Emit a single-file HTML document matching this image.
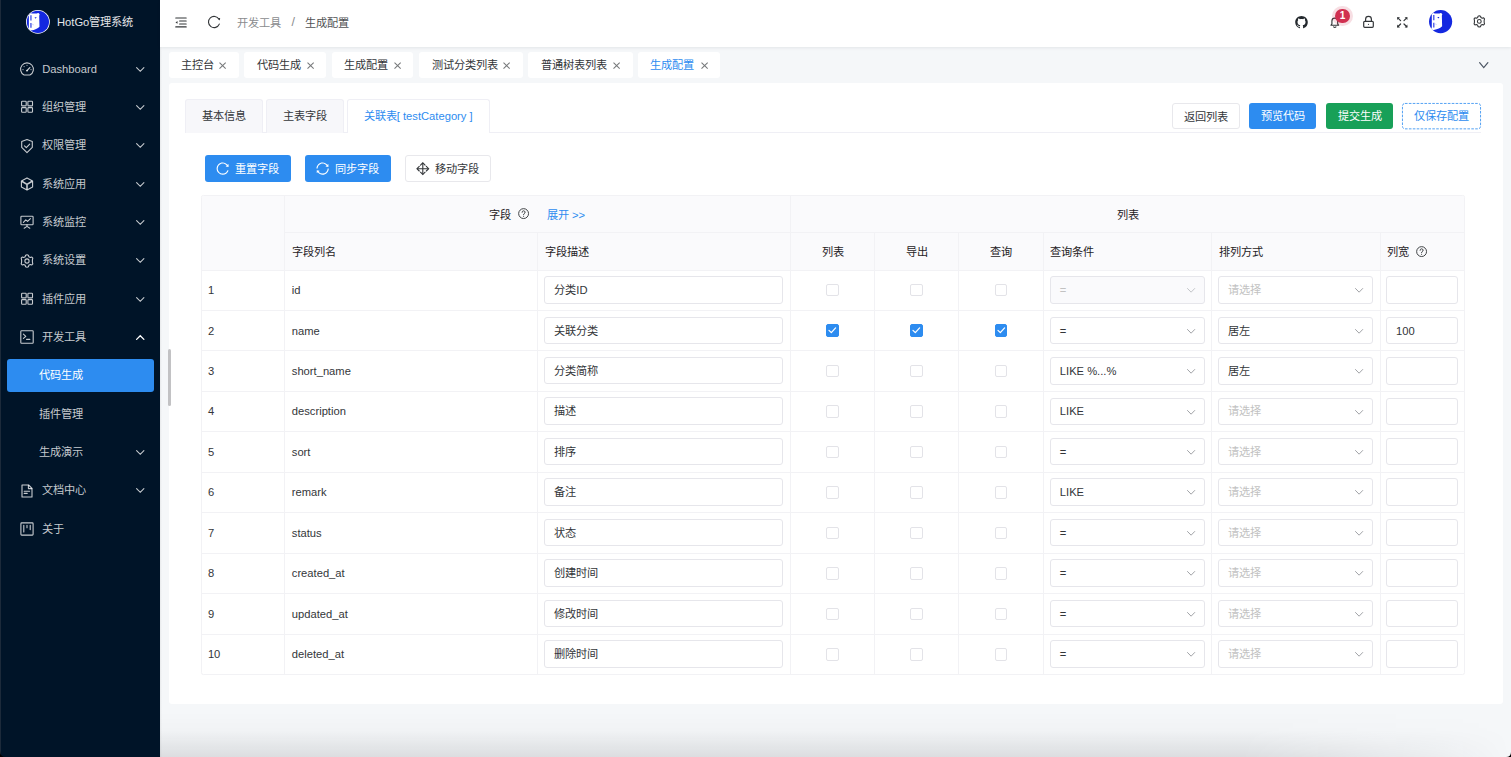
<!DOCTYPE html>
<html lang="zh-CN">
<head>
<meta charset="utf-8">
<style>
*{box-sizing:border-box;margin:0;padding:0}
html,body{width:1511px;height:757px;overflow:hidden;background:#f5f7f9;font-family:"Liberation Sans",sans-serif;font-size:11.2px;color:#333639}
svg{display:block;position:absolute;overflow:visible}
.a{position:absolute;white-space:nowrap;line-height:14px}
#side{position:absolute;left:0;top:0;width:160px;height:757px;background:#001428}
.mt{color:rgba(255,255,255,.78)}
#hdr{position:absolute;left:160px;top:0;width:1351px;height:47px;background:#fff;box-shadow:0 1px 3px rgba(0,21,41,.08)}
.tab{position:absolute;top:52px;height:26px;background:#fff;border-radius:3px}
#card{position:absolute;left:169px;top:83px;width:1334px;height:621px;background:#fff;border-radius:3px}
.itab{position:absolute;top:99px;height:34px;background:#f7f7fa;border:1px solid #efeff5;border-bottom:none;border-radius:3px 3px 0 0}
.btn{position:absolute;height:27px;border-radius:3px;text-align:center;line-height:27px;white-space:nowrap}
.cell{position:absolute}
.inp{position:absolute;height:27.4px;border:1px solid #e6e6eb;border-radius:3px;background:#fff}
.cb{position:absolute;width:12.5px;height:12.5px;border:1px solid #e3e3e8;border-radius:2px;background:#fff}
.cbon{background:#2d8cf0;border-color:#2d8cf0}
</style>
</head>
<body>
<div id="side">
<svg style="left:26.3px;top:9.8px" width="23.8" height="23.8" viewBox="0 0 24 24"><defs><clipPath id="lc1"><circle cx="12" cy="12" r="11.2"/></clipPath></defs><circle cx="12" cy="12" r="12" fill="#fff"/><circle cx="12" cy="12" r="11.2" fill="#1428e0"/>
<g clip-path="url(#lc1)"><path d="M2.9 4.2 Q3.2 3 4.4 3.1 Q5.4 3.2 6 3.6 L10.8 3.6 Q11.8 2.8 13 3.3 L13.8 4.6 L13.3 5.8 L13.6 16.8 Q11 19.6 5 20.6 L0 22 L2.9 18 Z" fill="#fff"/>
<path d="M5 5.3 V10.5 M5 13.1 V18" stroke="#1428e0" stroke-width="1.1"/><path d="M8.6 7.2 h2.2 l-1.1 1.6z" fill="#1428e0"/><path d="M5.8 14 l2.2 1.2" stroke="#c9cdf6" stroke-width="0.8"/></g></svg>
<div class="a" style="left:57px;top:14.5px;font-size:11.2px;color:#e6e6e8">HotGo管理系统</div>
<svg class="mt" style="left:20px;top:62.00px" width="14" height="14" viewBox="0 0 14 14"><path d="M4.09 13 A6.4 6.4 0 1 1 9.91 13 Z" stroke="currentColor" fill="none" stroke-width="1.1" stroke-linecap="round" stroke-linejoin="round"/><path d="M7 8.6 L9.8 5.6" stroke="currentColor" stroke-width="1.3" stroke-linecap="round"/><circle cx="7" cy="8.6" r="0.9" fill="currentColor"/><circle cx="7" cy="3.3" r="0.55" fill="currentColor"/><circle cx="4.1" cy="4.6" r="0.55" fill="currentColor"/><circle cx="3" cy="7.6" r="0.55" fill="currentColor"/><circle cx="11" cy="7.6" r="0.55" fill="currentColor"/></svg>
<div class="a mt" style="left:42.2px;top:61.60px">Dashboard</div>
<svg class="mt" style="left:135.5px;top:66.50px" width="8.5" height="5" viewBox="0 0 8.5 5"><path d="M0.6 0.6 L4.25 4.3 L7.9 0.6" stroke="currentColor" fill="none" stroke-width="1.1" stroke-linecap="round"/></svg>
<svg class="mt" style="left:20px;top:100.30px" width="14" height="14" viewBox="0 0 14 14"><rect x="1.6" y="1.3" width="4.6" height="4.6" rx="0.7" stroke="currentColor" fill="none" stroke-width="1.1" stroke-linecap="round" stroke-linejoin="round"/><rect x="7.9" y="1.3" width="4.6" height="4.6" rx="0.7" stroke="currentColor" fill="none" stroke-width="1.1" stroke-linecap="round" stroke-linejoin="round"/><rect x="1.6" y="7.6" width="4.6" height="4.6" rx="0.7" stroke="currentColor" fill="none" stroke-width="1.1" stroke-linecap="round" stroke-linejoin="round"/><rect x="7.9" y="7.6" width="4.6" height="4.6" rx="0.7" stroke="currentColor" fill="none" stroke-width="1.1" stroke-linecap="round" stroke-linejoin="round"/></svg>
<div class="a mt" style="left:42.2px;top:99.90px">组织管理</div>
<svg class="mt" style="left:135.5px;top:104.80px" width="8.5" height="5" viewBox="0 0 8.5 5"><path d="M0.6 0.6 L4.25 4.3 L7.9 0.6" stroke="currentColor" fill="none" stroke-width="1.1" stroke-linecap="round"/></svg>
<svg class="mt" style="left:20px;top:138.70px" width="14" height="14" viewBox="0 0 14 14"><path d="M7 0.6 L12.3 2.5 V8.4 L7 13.6 L1.7 8.4 V2.5 Z" stroke="currentColor" fill="none" stroke-width="1.1" stroke-linecap="round" stroke-linejoin="round"/><path d="M4.5 6.9 L6.3 8.7 L9.7 5.1" stroke="currentColor" fill="none" stroke-width="1.1" stroke-linecap="round" stroke-linejoin="round"/></svg>
<div class="a mt" style="left:42.2px;top:138.30px">权限管理</div>
<svg class="mt" style="left:135.5px;top:143.20px" width="8.5" height="5" viewBox="0 0 8.5 5"><path d="M0.6 0.6 L4.25 4.3 L7.9 0.6" stroke="currentColor" fill="none" stroke-width="1.1" stroke-linecap="round"/></svg>
<svg class="mt" style="left:20px;top:177.00px" width="14" height="14" viewBox="0 0 14 14"><path d="M7 0.9 L12.6 4 V10 L7 13.1 L1.4 10 V4 Z" stroke="currentColor" fill="none" stroke-width="1.1" stroke-linecap="round" stroke-linejoin="round"/><path d="M1.8 4.2 L7 7.4 L12.2 4.2 M7 7.4 V12.8" stroke="currentColor" fill="none" stroke-width="1.6" stroke-linejoin="round"/></svg>
<div class="a mt" style="left:42.2px;top:176.60px">系统应用</div>
<svg class="mt" style="left:135.5px;top:181.50px" width="8.5" height="5" viewBox="0 0 8.5 5"><path d="M0.6 0.6 L4.25 4.3 L7.9 0.6" stroke="currentColor" fill="none" stroke-width="1.1" stroke-linecap="round"/></svg>
<svg class="mt" style="left:20px;top:215.30px" width="14" height="14" viewBox="0 0 14 14"><rect x="0.9" y="1.2" width="12.2" height="8.6" rx="0.8" stroke="currentColor" fill="none" stroke-width="1.1" stroke-linecap="round" stroke-linejoin="round"/><path d="M3.4 7.4 L5.8 4.8 L7.6 6.4 L10.4 3.6" stroke="currentColor" fill="none" stroke-width="1.1" stroke-linecap="round" stroke-linejoin="round"/><path d="M7 9.8 V11.4 M4.2 13.2 L7 11.4 L9.8 13.2" stroke="currentColor" fill="none" stroke-width="1.1" stroke-linecap="round" stroke-linejoin="round"/></svg>
<div class="a mt" style="left:42.2px;top:214.90px">系统监控</div>
<svg class="mt" style="left:135.5px;top:219.80px" width="8.5" height="5" viewBox="0 0 8.5 5"><path d="M0.6 0.6 L4.25 4.3 L7.9 0.6" stroke="currentColor" fill="none" stroke-width="1.1" stroke-linecap="round"/></svg>
<svg class="mt" style="left:20px;top:253.70px" width="14" height="14" viewBox="0 0 14 14"><path d="M7 0.8 L8.4 1.2 L8.8 2.7 L10.3 3.5 L11.8 3 L12.8 4.2 L12.4 5.8 L12.4 8.2 L12.8 9.8 L11.8 11 L10.3 10.5 L8.8 11.3 L8.4 12.8 L7 13.2 L5.6 12.8 L5.2 11.3 L3.7 10.5 L2.2 11 L1.2 9.8 L1.6 8.2 L1.6 5.8 L1.2 4.2 L2.2 3 L3.7 3.5 L5.2 2.7 L5.6 1.2 Z" stroke="currentColor" fill="none" stroke-width="1.1" stroke-linecap="round" stroke-linejoin="round"/><circle cx="7" cy="7" r="2.1" stroke="currentColor" fill="none" stroke-width="1.1" stroke-linecap="round" stroke-linejoin="round"/></svg>
<div class="a mt" style="left:42.2px;top:253.30px">系统设置</div>
<svg class="mt" style="left:135.5px;top:258.20px" width="8.5" height="5" viewBox="0 0 8.5 5"><path d="M0.6 0.6 L4.25 4.3 L7.9 0.6" stroke="currentColor" fill="none" stroke-width="1.1" stroke-linecap="round"/></svg>
<svg class="mt" style="left:20px;top:292.00px" width="14" height="14" viewBox="0 0 14 14"><rect x="1.6" y="1.3" width="4.6" height="4.6" rx="0.7" stroke="currentColor" fill="none" stroke-width="1.1" stroke-linecap="round" stroke-linejoin="round"/><rect x="7.9" y="1.3" width="4.6" height="4.6" rx="0.7" stroke="currentColor" fill="none" stroke-width="1.1" stroke-linecap="round" stroke-linejoin="round"/><rect x="1.6" y="7.6" width="4.6" height="4.6" rx="0.7" stroke="currentColor" fill="none" stroke-width="1.1" stroke-linecap="round" stroke-linejoin="round"/><rect x="7.9" y="7.6" width="4.6" height="4.6" rx="0.7" stroke="currentColor" fill="none" stroke-width="1.1" stroke-linecap="round" stroke-linejoin="round"/></svg>
<div class="a mt" style="left:42.2px;top:291.60px">插件应用</div>
<svg class="mt" style="left:135.5px;top:296.50px" width="8.5" height="5" viewBox="0 0 8.5 5"><path d="M0.6 0.6 L4.25 4.3 L7.9 0.6" stroke="currentColor" fill="none" stroke-width="1.1" stroke-linecap="round"/></svg>
<svg class="mt" style="left:20px;top:330.30px" width="14" height="14" viewBox="0 0 14 14"><rect x="0.8" y="0.8" width="12.4" height="12.4" rx="0.8" stroke="currentColor" fill="none" stroke-width="1.1" stroke-linecap="round" stroke-linejoin="round"/><path d="M3.4 4.2 L5.8 6.3 L3.4 8.4 M6.6 9.4 H9.8" stroke="currentColor" fill="none" stroke-width="1.1" stroke-linecap="round" stroke-linejoin="round"/></svg>
<div class="a mt" style="left:42.2px;top:329.90px">开发工具</div>
<svg style="left:135.5px;top:334.80px;color:#fff" width="8.5" height="5" viewBox="0 0 8.5 5"><path d="M0.6 4.4 L4.25 0.7 L7.9 4.4" stroke="currentColor" fill="none" stroke-width="1.3" stroke-linecap="round"/></svg>
<div style="position:absolute;left:7px;top:358.90px;width:146.7px;height:33.6px;background:#2d8cf0;border-radius:3px"></div>
<div class="a" style="left:39.2px;top:368.30px;color:#fff">代码生成</div>
<div class="a mt" style="left:39.2px;top:406.60px">插件管理</div>
<div class="a mt" style="left:39.2px;top:444.90px">生成演示</div>
<svg class="mt" style="left:135.5px;top:449.80px" width="8.5" height="5" viewBox="0 0 8.5 5"><path d="M0.6 0.6 L4.25 4.3 L7.9 0.6" stroke="currentColor" fill="none" stroke-width="1.1" stroke-linecap="round"/></svg>
<svg class="mt" style="left:20px;top:483.70px" width="14" height="14" viewBox="0 0 14 14"><path d="M2 1 H8.6 L12 4.4 V13 H2 Z" stroke="currentColor" fill="none" stroke-width="1.1" stroke-linecap="round" stroke-linejoin="round"/><path d="M8.4 1.2 V4.6 H11.8" stroke="currentColor" fill="none" stroke-width="1.1" stroke-linecap="round" stroke-linejoin="round"/><path d="M4.2 7.2 H9.6 M4.2 9.4 H7.2" stroke="currentColor" fill="none" stroke-width="1.1" stroke-linecap="round" stroke-linejoin="round"/></svg>
<div class="a mt" style="left:42.2px;top:483.30px">文档中心</div>
<svg class="mt" style="left:135.5px;top:488.20px" width="8.5" height="5" viewBox="0 0 8.5 5"><path d="M0.6 0.6 L4.25 4.3 L7.9 0.6" stroke="currentColor" fill="none" stroke-width="1.1" stroke-linecap="round"/></svg>
<svg class="mt" style="left:20px;top:522.00px" width="14" height="14" viewBox="0 0 14 14"><rect x="0.9" y="0.9" width="12.2" height="12.2" rx="0.8" stroke="currentColor" fill="none" stroke-width="1.1" stroke-linecap="round" stroke-linejoin="round"/><path d="M3.8 3.2 V10 M7 3.2 V5.8 M10.2 3.2 V7.6" stroke="currentColor" fill="none" stroke-width="1.1" stroke-linecap="round" stroke-linejoin="round"/></svg>
<div class="a mt" style="left:42.2px;top:521.60px">关于</div>
</div>
<div id="hdr"></div>
<svg style="left:174.5px;top:16.5px" width="12" height="11" viewBox="0 0 12 11"><path d="M0.75 1 H11.2 M4.6 4 H11.2 M4.6 7 H11.2 M0.75 9.9 H11.2" stroke="#333639" stroke-width="1.1" stroke-linecap="round" fill="none"/><path d="M0.5 5.45 L2.5 4.1 V6.8 Z" fill="#333639"/></svg>
<svg style="left:207.8px;top:15.8px" width="12" height="12" viewBox="0 0 12 12"><path d="M10.95 3.2 A5.6 5.6 0 1 0 11.29 8.1" stroke="#333639" stroke-width="1.1" fill="none" stroke-linecap="round"/><path d="M9.7 2.3 L12.2 2.1 L11.7 4.5 Z" fill="#333639"/></svg>
<div class="a" style="left:237.4px;top:15.6px;color:#8a8c8e">开发工具</div>
<div class="a" style="left:291.4px;top:15.2px;font-size:12.5px;color:#8a8c8e">/</div>
<div class="a" style="left:305px;top:15.6px;color:#505254">生成配置</div>
<svg style="left:1295px;top:15.6px" width="13" height="12.6" viewBox="0 0 16 16"><path fill="#24292e" d="M8 0C3.58 0 0 3.58 0 8c0 3.54 2.29 6.53 5.47 7.59.4.07.55-.17.55-.38 0-.19-.01-.82-.01-1.49-2.01.37-2.53-.49-2.69-.94-.09-.23-.48-.94-.82-1.13-.28-.15-.68-.52-.01-.53.63-.01 1.08.58 1.23.82.72 1.21 1.87.87 2.33.66.07-.52.28-.87.51-1.07-1.78-.2-3.64-.89-3.640-3.95 0-.87.31-1.59.82-2.15-.08-.2-.36-1.02.08-2.12 0 0 .67-.21 2.2.82.64-.18 1.32-.27 2-.27.68 0 1.36.09 2 .27 1.53-1.04 2.2-.82 2.2-.82.44 1.1.16 1.92.08 2.12.51.56.82 1.27.82 2.15 0 3.070-1.87 3.75-3.65 3.95.29.25.54.73.54 1.48 0 1.07-.01 1.93-.01 2.200 0 .21.15.46.55.38A8.013 8.013 0 0016 8c0-4.42-3.58-8-8-8z"/></svg>
<svg style="left:1330.3px;top:16.2px" width="9.6" height="12" viewBox="0 0 10 12.5"><path d="M1 9.6 L2 8.2 V5.2 A3 3 0 0 1 8 5.2 V8.2 L9 9.6 Z" stroke="#333639" fill="none" stroke-width="1.2" stroke-linecap="round" stroke-linejoin="round"/><path d="M3.8 11.4 Q5 12.6 6.2 11.4" stroke="#333639" fill="none" stroke-width="1.2" stroke-linecap="round" stroke-linejoin="round"/></svg>
<div style="position:absolute;left:1332px;top:5.5px;width:20.6px;height:20.6px;border-radius:50%;background:rgba(208,48,80,.16)"></div>
<div style="position:absolute;left:1335.2px;top:8.7px;width:14.6px;height:14.6px;border-radius:50%;background:#d03050;color:#fff;font-size:10px;font-weight:bold;line-height:14.6px;text-align:center">1</div>
<svg style="left:1363px;top:16px" width="11" height="12" viewBox="0 0 11 12"><rect x="0.7" y="5.3" width="9.6" height="6" rx="1" stroke="#333639" fill="none" stroke-width="1.2" stroke-linecap="round" stroke-linejoin="round"/><path d="M2.6 5.3 V3.3 A2.9 2.9 0 0 1 8.4 3.3 V5.3" stroke="#333639" fill="none" stroke-width="1.2" stroke-linecap="round" stroke-linejoin="round"/><circle cx="5.5" cy="8.3" r="0.6" fill="#333639"/></svg>
<svg style="left:1396.6px;top:16.8px" width="10.6" height="10.6" viewBox="0 0 10.6 10.6"><path d="M0.8 0.8 L3.6 3.6 M9.8 0.8 L7 3.6 M0.8 9.8 L3.6 7 M9.8 9.8 L7 7" stroke="#333639" fill="none" stroke-width="1.2" stroke-linecap="round" stroke-linejoin="round"/><path d="M0.2 0.2 H3 L0.2 3 Z M10.4 0.2 H7.6 L10.4 3 Z M0.2 10.4 H3 L0.2 7.6 Z M10.4 10.4 H7.6 L10.4 7.6 Z" fill="#333639"/></svg>
<svg style="left:1429.2px;top:9.9px" width="23.2" height="23.2" viewBox="0 0 24 24"><defs><clipPath id="lc2"><circle cx="12" cy="12" r="12"/></clipPath></defs><circle cx="12" cy="12" r="12" fill="#1428e0"/>
<g clip-path="url(#lc2)"><path d="M2.9 4.2 Q3.2 3 4.4 3.1 Q5.4 3.2 6 3.6 L10.8 3.6 Q11.8 2.8 13 3.3 L13.8 4.6 L13.3 5.8 L13.6 16.8 Q11 19.6 5 20.6 L0 22 L2.9 18 Z" fill="#fff"/>
<path d="M5 5.3 V10.5 M5 13.1 V18" stroke="#1428e0" stroke-width="1.1"/><path d="M8.6 7.2 h2.2 l-1.1 1.6z" fill="#1428e0"/><path d="M5.8 14 l2.2 1.2" stroke="#c9cdf6" stroke-width="0.8"/></g></svg>
<svg style="left:1472.8px;top:15.4px" width="12.6" height="12.8" viewBox="0 0 14 14"><path d="M7 0.8 L8.4 1.2 L8.8 2.7 L10.3 3.5 L11.8 3 L12.8 4.2 L12.4 5.8 L12.4 8.2 L12.8 9.8 L11.8 11 L10.3 10.5 L8.8 11.3 L8.4 12.8 L7 13.2 L5.6 12.8 L5.2 11.3 L3.7 10.5 L2.2 11 L1.2 9.8 L1.6 8.2 L1.6 5.8 L1.2 4.2 L2.2 3 L3.7 3.5 L5.2 2.7 L5.6 1.2 Z" stroke="#333639" fill="none" stroke-width="1.2" stroke-linecap="round" stroke-linejoin="round"/><circle cx="7" cy="7" r="2.1" stroke="#333639" fill="none" stroke-width="1.2" stroke-linecap="round" stroke-linejoin="round"/></svg>
<div class="tab" style="left:168.7px;width:69.9px"></div>
<div class="a" style="left:181.1px;top:58px;color:#333639">主控台</div>
<svg style="left:219.3px;top:61.6px" width="7.2" height="7.2" viewBox="0 0 7 7"><path d="M0.5 0.5 L6.5 6.5 M6.5 0.5 L0.5 6.5" stroke="#76787a" stroke-width="1" fill="none"/></svg>
<div class="tab" style="left:244.2px;width:81.8px"></div>
<div class="a" style="left:256.6px;top:58px;color:#333639">代码生成</div>
<svg style="left:306.7px;top:61.6px" width="7.2" height="7.2" viewBox="0 0 7 7"><path d="M0.5 0.5 L6.5 6.5 M6.5 0.5 L0.5 6.5" stroke="#76787a" stroke-width="1" fill="none"/></svg>
<div class="tab" style="left:331.6px;width:81.8px"></div>
<div class="a" style="left:344.0px;top:58px;color:#333639">生成配置</div>
<svg style="left:394.1px;top:61.6px" width="7.2" height="7.2" viewBox="0 0 7 7"><path d="M0.5 0.5 L6.5 6.5 M6.5 0.5 L0.5 6.5" stroke="#76787a" stroke-width="1" fill="none"/></svg>
<div class="tab" style="left:419.1px;width:103.5px"></div>
<div class="a" style="left:431.5px;top:58px;color:#333639">测试分类列表</div>
<svg style="left:503.3px;top:61.6px" width="7.2" height="7.2" viewBox="0 0 7 7"><path d="M0.5 0.5 L6.5 6.5 M6.5 0.5 L0.5 6.5" stroke="#76787a" stroke-width="1" fill="none"/></svg>
<div class="tab" style="left:528.2px;width:104.4px"></div>
<div class="a" style="left:540.6px;top:58px;color:#333639">普通树表列表</div>
<svg style="left:613.3px;top:61.6px" width="7.2" height="7.2" viewBox="0 0 7 7"><path d="M0.5 0.5 L6.5 6.5 M6.5 0.5 L0.5 6.5" stroke="#76787a" stroke-width="1" fill="none"/></svg>
<div class="tab" style="left:637.8px;width:82.2px"></div>
<div class="a" style="left:650.2px;top:58px;color:#2d8cf0">生成配置</div>
<svg style="left:700.7px;top:61.6px" width="7.2" height="7.2" viewBox="0 0 7 7"><path d="M0.5 0.5 L6.5 6.5 M6.5 0.5 L0.5 6.5" stroke="#76787a" stroke-width="1" fill="none"/></svg>
<svg style="left:1479px;top:61.6px" width="9.5" height="6.4" viewBox="0 0 9.5 6.4"><path d="M0.6 0.6 L4.75 5.6 L8.9 0.6" stroke="#4b5563" stroke-width="1.2" fill="none" stroke-linecap="round"/></svg>
<div id="card"></div>
<div style="position:absolute;left:185px;top:132.3px;width:1296px;height:1px;background:#efeff5"></div>
<div class="itab" style="left:184.7px;width:77.9px;"></div>
<div class="a" style="left:184.7px;width:77.9px;text-align:center;top:109px;color:#333639">基本信息</div>
<div class="itab" style="left:265.8px;width:77.9px;"></div>
<div class="a" style="left:265.8px;width:77.9px;text-align:center;top:109px;color:#333639">主表字段</div>
<div class="itab" style="left:346.9px;width:142.7px;background:#fff;height:34.4px"></div>
<div class="a" style="left:346.9px;width:142.7px;text-align:center;top:109px;color:#2d8cf0">关联表[ testCategory ]</div>
<div class="btn" style="left:1172.2px;top:102.6px;width:67.4px;height:26.3px;line-height:26.3px;border:1px solid #e8e8ec;color:#333639">返回列表</div>
<div class="btn" style="left:1249.1px;top:102.6px;width:67px;height:26.3px;line-height:26.3px;background:#2d8cf0;color:#fff">预览代码</div>
<div class="btn" style="left:1326px;top:102.6px;width:67px;height:26.3px;line-height:26.3px;background:#18a058;color:#fff">提交生成</div>
<svg style="left:1402px;top:102.6px" width="79" height="26.3" viewBox="0 0 79 26.3"><rect x="0.45" y="0.45" width="78.1" height="25.4" rx="2.5" stroke="#2d8cf0" stroke-width="0.9" stroke-dasharray="2.6 1.3" fill="none" opacity=".9"/></svg>
<div class="btn" style="left:1402px;top:102.6px;width:79px;height:26.3px;line-height:26.3px;color:#2d8cf0">仅保存配置</div>
<div class="btn" style="left:204.7px;top:155.1px;width:86.2px;height:27.4px;background:#2d8cf0;color:#fff"></div>
<svg style="left:215.8px;top:161.9px" width="13.2" height="13.2" viewBox="60 60 904 904"><path fill="#fff" d="M909.1 209.3l-56.4 44.1C775.8 155.1 656.2 92 521.9 92 290 92 102.3 279.5 102 511.5 101.7 743.7 289.8 932 521.9 932c181.3 0 335.8-115 394.6-276.1 1.5-4.2-.7-8.9-4.9-10.3l-56.7-19.5a8 8 0 00-10.1 4.8c-1.8 5-3.8 10-5.9 14.9-17.3 41-42.1 77.8-73.7 109.4A344.77 344.77 0 01655.9 829c-42.3 17.9-87.4 27-133.8 27-46.5 0-91.5-9.1-133.8-27A341.5 341.5 0 01279 755.2a342.16 342.16 0 01-73.7-109.4c-17.9-42.4-27-87.4-27-133.9s9.1-91.5 27-133.9c17.3-41 42.1-77.8 73.7-109.4 31.6-31.6 68.4-56.4 109.3-73.8 42.3-17.9 87.4-27 133.8-27 46.5 0 91.5 9.1 133.8 27a341.5 341.5 0 01109.3 73.8c9.9 9.9 19.2 20.4 27.8 31.4l-60.2 47a8 8 0 003 14.1l175.6 43c5 1.2 9.9-2.6 9.9-7.7l.8-180.9c-.1-6.6-7.8-10.3-13-6.2z"/></svg>
<div class="a" style="left:235.4px;top:161.8px;color:#fff">重置字段</div>
<div class="btn" style="left:304.8px;top:155.1px;width:86px;height:27.4px;background:#2d8cf0;color:#fff"></div>
<svg style="left:316px;top:161.9px" width="13.2" height="13.2" viewBox="60 60 904 904"><path fill="#fff" d="M168 504.2c1-43.7 10-86.1 26.9-126 17.3-41 42.1-77.7 73.7-109.4S337 212.3 378 195c42.4-17.9 87.4-27 133.9-27s91.5 9.1 133.8 27A341.5 341.5 0 01755 268.8c9.9 9.9 19.2 20.4 27.8 31.4l-60.2 47a8 8 0 003 14.1l175.7 43c5 1.2 9.9-2.6 9.9-7.7l.8-180.9c0-6.7-7.7-10.5-12.9-6.300l-56.4 44.1C765.8 155.1 646.2 92 511.8 92 282.7 92 96.3 275.6 92 503.8a8 8 0 008 8.2h60c4.4 0 7.9-3.5 8-7.8zm756 7.8h-60c-4.4 0-7.9 3.5-8 7.8-1 43.7-10 86.1-26.9 126-17.3 41-42.1 77.8-73.7 109.4A342.45 342.45 0 01512.1 856a342.24 342.24 0 01-243.2-100.8c-9.9-9.9-19.2-20.4-27.8-31.4l60.2-47a8 8 0 00-3-14.1l-175.7-43c-5-1.2-9.9 2.6-9.9 7.7l-.7 181c0 6.7 7.7 10.5 12.9 6.3l56.4-44.1C258.2 868.9 377.8 932 512.2 932c229.2 0 415.5-183.7 419.8-411.8a8 8 0 00-8-8.2z"/></svg>
<div class="a" style="left:335.4px;top:161.8px;color:#fff">同步字段</div>
<div class="btn" style="left:404.5px;top:155.1px;width:86.2px;height:27.4px;border:1px solid #e8e8ec"></div>
<svg style="left:416.2px;top:161.7px" width="13.6" height="13.4" viewBox="0 0 14 14"><path d="M7 1.2 V12.8 M1.2 7 H12.8" stroke="#333639" stroke-width="1.15" fill="none"/><path d="M4.6 3.3 L7 0.9 L9.4 3.3 M4.6 10.7 L7 13.1 L9.4 10.7 M3.3 4.6 L0.9 7 L3.3 9.4 M10.7 4.6 L13.1 7 L10.7 9.4" stroke="#333639" stroke-width="1.15" fill="none" stroke-linejoin="miter" stroke-linecap="round"/></svg>
<div class="a" style="left:435px;top:161.8px;color:#333639">移动字段</div>
<div style="position:absolute;left:200.60px;top:195.20px;width:1264.00px;height:479.80px;border:1px solid #f2f2f5;border-radius:2.4px;overflow:hidden;background:#fff"><div style="height:74.30px;background:#fafafc"></div></div>
<div style="position:absolute;left:284.00px;top:232.40px;width:1180.00px;height:1px;background:#f2f2f5"></div>
<div style="position:absolute;left:201.00px;top:269.50px;width:1263.00px;height:1px;background:#f2f2f5"></div>
<div style="position:absolute;left:201.00px;top:309.95px;width:1263.00px;height:1px;background:#f2f2f5"></div>
<div style="position:absolute;left:201.00px;top:350.40px;width:1263.00px;height:1px;background:#f2f2f5"></div>
<div style="position:absolute;left:201.00px;top:390.85px;width:1263.00px;height:1px;background:#f2f2f5"></div>
<div style="position:absolute;left:201.00px;top:431.30px;width:1263.00px;height:1px;background:#f2f2f5"></div>
<div style="position:absolute;left:201.00px;top:471.75px;width:1263.00px;height:1px;background:#f2f2f5"></div>
<div style="position:absolute;left:201.00px;top:512.20px;width:1263.00px;height:1px;background:#f2f2f5"></div>
<div style="position:absolute;left:201.00px;top:552.65px;width:1263.00px;height:1px;background:#f2f2f5"></div>
<div style="position:absolute;left:201.00px;top:593.10px;width:1263.00px;height:1px;background:#f2f2f5"></div>
<div style="position:absolute;left:201.00px;top:633.55px;width:1263.00px;height:1px;background:#f2f2f5"></div>
<div style="position:absolute;left:283.60px;top:195.20px;width:1px;height:478.80px;background:#f2f2f5"></div>
<div style="position:absolute;left:790.10px;top:195.20px;width:1px;height:478.80px;background:#f2f2f5"></div>
<div style="position:absolute;left:537.10px;top:232.40px;width:1px;height:441.60px;background:#f2f2f5"></div>
<div style="position:absolute;left:874.30px;top:232.40px;width:1px;height:441.60px;background:#f2f2f5"></div>
<div style="position:absolute;left:958.30px;top:232.40px;width:1px;height:441.60px;background:#f2f2f5"></div>
<div style="position:absolute;left:1042.80px;top:232.40px;width:1px;height:441.60px;background:#f2f2f5"></div>
<div style="position:absolute;left:1210.90px;top:232.40px;width:1px;height:441.60px;background:#f2f2f5"></div>
<div style="position:absolute;left:1379.60px;top:232.40px;width:1px;height:441.60px;background:#f2f2f5"></div>
<div class="a" style="left:489.3px;top:207.6px;font-weight:500;color:#1f2225">字段</div>
<svg style="left:518.3px;top:208.4px" width="11.2" height="11.2" viewBox="0 0 12 12"><circle cx="6" cy="6" r="5.3" stroke="#333639" stroke-width="1" fill="none"/><path d="M4.4 4.6 A1.6 1.6 0 1 1 6.6 6.1 C6.1 6.3 6 6.6 6 7.2" stroke="#333639" stroke-width="1" fill="none" stroke-linecap="round"/><circle cx="6" cy="8.9" r="0.6" fill="#333639"/></svg>
<div class="a" style="left:546.8px;top:207.6px;color:#2d8cf0">展开 &gt;&gt;</div>
<div class="a" style="left:1116.5px;top:207.6px;font-weight:500;color:#1f2225">列表</div>
<div class="a" style="left:291.8px;top:245.1px;font-weight:500;color:#1f2225">字段列名</div>
<div class="a" style="left:545.3px;top:245.1px;font-weight:500;color:#1f2225">字段描述</div>
<div class="a" style="left:812.6px;width:40px;text-align:center;top:245.1px;font-weight:500;color:#1f2225">列表</div>
<div class="a" style="left:896.7px;width:40px;text-align:center;top:245.1px;font-weight:500;color:#1f2225">导出</div>
<div class="a" style="left:981.0px;width:40px;text-align:center;top:245.1px;font-weight:500;color:#1f2225">查询</div>
<div class="a" style="left:1050.4px;top:245.1px;font-weight:500;color:#1f2225">查询条件</div>
<div class="a" style="left:1218.5px;top:245.1px;font-weight:500;color:#1f2225">排列方式</div>
<div class="a" style="left:1386.5px;top:245.1px;font-weight:500;color:#1f2225">列宽</div>
<svg style="left:1415.8px;top:245.8px" width="11.2" height="11.2" viewBox="0 0 12 12"><circle cx="6" cy="6" r="5.3" stroke="#333639" stroke-width="1" fill="none"/><path d="M4.4 4.6 A1.6 1.6 0 1 1 6.6 6.1 C6.1 6.3 6 6.6 6 7.2" stroke="#333639" stroke-width="1" fill="none" stroke-linecap="round"/><circle cx="6" cy="8.9" r="0.6" fill="#333639"/></svg>
<div class="a" style="left:207.9px;top:283.12px">1</div>
<div class="a" style="left:291.8px;top:283.12px">id</div>
<div class="inp" style="left:544.2px;top:276.12px;width:239.2px"></div>
<div class="a" style="left:554.3px;top:283.12px">分类ID</div>
<div class="cb" style="left:826.35px;top:283.98px"></div>
<div class="cb" style="left:910.45px;top:283.98px"></div>
<div class="cb" style="left:994.70px;top:283.98px"></div>
<div class="inp" style="left:1050px;top:276.23px;width:154.5px;background:#fafafc"></div>
<div class="a" style="left:1059.8px;top:283.12px;color:#c2c2c2">=</div>
<svg style="left:1187.3px;top:288.1px" width="8.2" height="4.8" viewBox="0 0 8.2 4.8"><path d="M0.5 0.5 L4.1 4.2 L7.7 0.5" stroke="#c2c4c8" stroke-width="1" fill="none" stroke-linecap="round"/></svg>
<div class="inp" style="left:1218px;top:276.23px;width:155.4px"></div>
<div class="a" style="left:1227.7px;top:283.12px;color:#c2c2c2">请选择</div>
<svg style="left:1355.3px;top:288.1px" width="8.2" height="4.8" viewBox="0 0 8.2 4.8"><path d="M0.5 0.5 L4.1 4.2 L7.7 0.5" stroke="#a0a2a6" stroke-width="1" fill="none" stroke-linecap="round"/></svg>
<div class="inp" style="left:1386.2px;top:276.23px;width:71.5px"></div>
<div class="a" style="left:207.9px;top:323.57px">2</div>
<div class="a" style="left:291.8px;top:323.57px">name</div>
<div class="inp" style="left:544.2px;top:316.57px;width:239.2px"></div>
<div class="a" style="left:554.3px;top:323.57px">关联分类</div>
<div class="cb cbon" style="left:826.35px;top:324.43px"></div>
<svg style="left:826.35px;top:324.43px" width="12.5" height="12.5" viewBox="0 0 12.5 12.5"><path d="M3 6.4 L5.3 8.6 L9.6 3.9" stroke="#fff" stroke-width="1.3" fill="none" stroke-linecap="round" stroke-linejoin="round"/></svg>
<div class="cb cbon" style="left:910.45px;top:324.43px"></div>
<svg style="left:910.45px;top:324.43px" width="12.5" height="12.5" viewBox="0 0 12.5 12.5"><path d="M3 6.4 L5.3 8.6 L9.6 3.9" stroke="#fff" stroke-width="1.3" fill="none" stroke-linecap="round" stroke-linejoin="round"/></svg>
<div class="cb cbon" style="left:994.70px;top:324.43px"></div>
<svg style="left:994.70px;top:324.43px" width="12.5" height="12.5" viewBox="0 0 12.5 12.5"><path d="M3 6.4 L5.3 8.6 L9.6 3.9" stroke="#fff" stroke-width="1.3" fill="none" stroke-linecap="round" stroke-linejoin="round"/></svg>
<div class="inp" style="left:1050px;top:316.68px;width:154.5px;background:#fff"></div>
<div class="a" style="left:1059.8px;top:323.57px;color:#333639">=</div>
<svg style="left:1187.3px;top:328.6px" width="8.2" height="4.8" viewBox="0 0 8.2 4.8"><path d="M0.5 0.5 L4.1 4.2 L7.7 0.5" stroke="#a0a2a6" stroke-width="1" fill="none" stroke-linecap="round"/></svg>
<div class="inp" style="left:1218px;top:316.68px;width:155.4px"></div>
<div class="a" style="left:1227.7px;top:323.57px;color:#333639">居左</div>
<svg style="left:1355.3px;top:328.6px" width="8.2" height="4.8" viewBox="0 0 8.2 4.8"><path d="M0.5 0.5 L4.1 4.2 L7.7 0.5" stroke="#a0a2a6" stroke-width="1" fill="none" stroke-linecap="round"/></svg>
<div class="inp" style="left:1386.2px;top:316.68px;width:71.5px"></div>
<div class="a" style="left:1396px;top:323.57px">100</div>
<div class="a" style="left:207.9px;top:364.02px">3</div>
<div class="a" style="left:291.8px;top:364.02px">short_name</div>
<div class="inp" style="left:544.2px;top:357.02px;width:239.2px"></div>
<div class="a" style="left:554.3px;top:364.02px">分类简称</div>
<div class="cb" style="left:826.35px;top:364.88px"></div>
<div class="cb" style="left:910.45px;top:364.88px"></div>
<div class="cb" style="left:994.70px;top:364.88px"></div>
<div class="inp" style="left:1050px;top:357.12px;width:154.5px;background:#fff"></div>
<div class="a" style="left:1059.8px;top:364.02px;color:#333639">LIKE %...%</div>
<svg style="left:1187.3px;top:369.0px" width="8.2" height="4.8" viewBox="0 0 8.2 4.8"><path d="M0.5 0.5 L4.1 4.2 L7.7 0.5" stroke="#a0a2a6" stroke-width="1" fill="none" stroke-linecap="round"/></svg>
<div class="inp" style="left:1218px;top:357.12px;width:155.4px"></div>
<div class="a" style="left:1227.7px;top:364.02px;color:#333639">居左</div>
<svg style="left:1355.3px;top:369.0px" width="8.2" height="4.8" viewBox="0 0 8.2 4.8"><path d="M0.5 0.5 L4.1 4.2 L7.7 0.5" stroke="#a0a2a6" stroke-width="1" fill="none" stroke-linecap="round"/></svg>
<div class="inp" style="left:1386.2px;top:357.12px;width:71.5px"></div>
<div class="a" style="left:207.9px;top:404.48px">4</div>
<div class="a" style="left:291.8px;top:404.48px">description</div>
<div class="inp" style="left:544.2px;top:397.48px;width:239.2px"></div>
<div class="a" style="left:554.3px;top:404.48px">描述</div>
<div class="cb" style="left:826.35px;top:405.33px"></div>
<div class="cb" style="left:910.45px;top:405.33px"></div>
<div class="cb" style="left:994.70px;top:405.33px"></div>
<div class="inp" style="left:1050px;top:397.58px;width:154.5px;background:#fff"></div>
<div class="a" style="left:1059.8px;top:404.48px;color:#333639">LIKE</div>
<svg style="left:1187.3px;top:409.5px" width="8.2" height="4.8" viewBox="0 0 8.2 4.8"><path d="M0.5 0.5 L4.1 4.2 L7.7 0.5" stroke="#a0a2a6" stroke-width="1" fill="none" stroke-linecap="round"/></svg>
<div class="inp" style="left:1218px;top:397.58px;width:155.4px"></div>
<div class="a" style="left:1227.7px;top:404.48px;color:#c2c2c2">请选择</div>
<svg style="left:1355.3px;top:409.5px" width="8.2" height="4.8" viewBox="0 0 8.2 4.8"><path d="M0.5 0.5 L4.1 4.2 L7.7 0.5" stroke="#a0a2a6" stroke-width="1" fill="none" stroke-linecap="round"/></svg>
<div class="inp" style="left:1386.2px;top:397.58px;width:71.5px"></div>
<div class="a" style="left:207.9px;top:444.93px">5</div>
<div class="a" style="left:291.8px;top:444.93px">sort</div>
<div class="inp" style="left:544.2px;top:437.93px;width:239.2px"></div>
<div class="a" style="left:554.3px;top:444.93px">排序</div>
<div class="cb" style="left:826.35px;top:445.78px"></div>
<div class="cb" style="left:910.45px;top:445.78px"></div>
<div class="cb" style="left:994.70px;top:445.78px"></div>
<div class="inp" style="left:1050px;top:438.03px;width:154.5px;background:#fff"></div>
<div class="a" style="left:1059.8px;top:444.93px;color:#333639">=</div>
<svg style="left:1187.3px;top:449.9px" width="8.2" height="4.8" viewBox="0 0 8.2 4.8"><path d="M0.5 0.5 L4.1 4.2 L7.7 0.5" stroke="#a0a2a6" stroke-width="1" fill="none" stroke-linecap="round"/></svg>
<div class="inp" style="left:1218px;top:438.03px;width:155.4px"></div>
<div class="a" style="left:1227.7px;top:444.93px;color:#c2c2c2">请选择</div>
<svg style="left:1355.3px;top:449.9px" width="8.2" height="4.8" viewBox="0 0 8.2 4.8"><path d="M0.5 0.5 L4.1 4.2 L7.7 0.5" stroke="#a0a2a6" stroke-width="1" fill="none" stroke-linecap="round"/></svg>
<div class="inp" style="left:1386.2px;top:438.03px;width:71.5px"></div>
<div class="a" style="left:207.9px;top:485.38px">6</div>
<div class="a" style="left:291.8px;top:485.38px">remark</div>
<div class="inp" style="left:544.2px;top:478.38px;width:239.2px"></div>
<div class="a" style="left:554.3px;top:485.38px">备注</div>
<div class="cb" style="left:826.35px;top:486.23px"></div>
<div class="cb" style="left:910.45px;top:486.23px"></div>
<div class="cb" style="left:994.70px;top:486.23px"></div>
<div class="inp" style="left:1050px;top:478.48px;width:154.5px;background:#fff"></div>
<div class="a" style="left:1059.8px;top:485.38px;color:#333639">LIKE</div>
<svg style="left:1187.3px;top:490.4px" width="8.2" height="4.8" viewBox="0 0 8.2 4.8"><path d="M0.5 0.5 L4.1 4.2 L7.7 0.5" stroke="#a0a2a6" stroke-width="1" fill="none" stroke-linecap="round"/></svg>
<div class="inp" style="left:1218px;top:478.48px;width:155.4px"></div>
<div class="a" style="left:1227.7px;top:485.38px;color:#c2c2c2">请选择</div>
<svg style="left:1355.3px;top:490.4px" width="8.2" height="4.8" viewBox="0 0 8.2 4.8"><path d="M0.5 0.5 L4.1 4.2 L7.7 0.5" stroke="#a0a2a6" stroke-width="1" fill="none" stroke-linecap="round"/></svg>
<div class="inp" style="left:1386.2px;top:478.48px;width:71.5px"></div>
<div class="a" style="left:207.9px;top:525.83px">7</div>
<div class="a" style="left:291.8px;top:525.83px">status</div>
<div class="inp" style="left:544.2px;top:518.83px;width:239.2px"></div>
<div class="a" style="left:554.3px;top:525.83px">状态</div>
<div class="cb" style="left:826.35px;top:526.68px"></div>
<div class="cb" style="left:910.45px;top:526.68px"></div>
<div class="cb" style="left:994.70px;top:526.68px"></div>
<div class="inp" style="left:1050px;top:518.93px;width:154.5px;background:#fff"></div>
<div class="a" style="left:1059.8px;top:525.83px;color:#333639">=</div>
<svg style="left:1187.3px;top:530.8px" width="8.2" height="4.8" viewBox="0 0 8.2 4.8"><path d="M0.5 0.5 L4.1 4.2 L7.7 0.5" stroke="#a0a2a6" stroke-width="1" fill="none" stroke-linecap="round"/></svg>
<div class="inp" style="left:1218px;top:518.93px;width:155.4px"></div>
<div class="a" style="left:1227.7px;top:525.83px;color:#c2c2c2">请选择</div>
<svg style="left:1355.3px;top:530.8px" width="8.2" height="4.8" viewBox="0 0 8.2 4.8"><path d="M0.5 0.5 L4.1 4.2 L7.7 0.5" stroke="#a0a2a6" stroke-width="1" fill="none" stroke-linecap="round"/></svg>
<div class="inp" style="left:1386.2px;top:518.93px;width:71.5px"></div>
<div class="a" style="left:207.9px;top:566.28px">8</div>
<div class="a" style="left:291.8px;top:566.28px">created_at</div>
<div class="inp" style="left:544.2px;top:559.28px;width:239.2px"></div>
<div class="a" style="left:554.3px;top:566.28px">创建时间</div>
<div class="cb" style="left:826.35px;top:567.13px"></div>
<div class="cb" style="left:910.45px;top:567.13px"></div>
<div class="cb" style="left:994.70px;top:567.13px"></div>
<div class="inp" style="left:1050px;top:559.38px;width:154.5px;background:#fff"></div>
<div class="a" style="left:1059.8px;top:566.28px;color:#333639">=</div>
<svg style="left:1187.3px;top:571.3px" width="8.2" height="4.8" viewBox="0 0 8.2 4.8"><path d="M0.5 0.5 L4.1 4.2 L7.7 0.5" stroke="#a0a2a6" stroke-width="1" fill="none" stroke-linecap="round"/></svg>
<div class="inp" style="left:1218px;top:559.38px;width:155.4px"></div>
<div class="a" style="left:1227.7px;top:566.28px;color:#c2c2c2">请选择</div>
<svg style="left:1355.3px;top:571.3px" width="8.2" height="4.8" viewBox="0 0 8.2 4.8"><path d="M0.5 0.5 L4.1 4.2 L7.7 0.5" stroke="#a0a2a6" stroke-width="1" fill="none" stroke-linecap="round"/></svg>
<div class="inp" style="left:1386.2px;top:559.38px;width:71.5px"></div>
<div class="a" style="left:207.9px;top:606.73px">9</div>
<div class="a" style="left:291.8px;top:606.73px">updated_at</div>
<div class="inp" style="left:544.2px;top:599.73px;width:239.2px"></div>
<div class="a" style="left:554.3px;top:606.73px">修改时间</div>
<div class="cb" style="left:826.35px;top:607.58px"></div>
<div class="cb" style="left:910.45px;top:607.58px"></div>
<div class="cb" style="left:994.70px;top:607.58px"></div>
<div class="inp" style="left:1050px;top:599.83px;width:154.5px;background:#fff"></div>
<div class="a" style="left:1059.8px;top:606.73px;color:#333639">=</div>
<svg style="left:1187.3px;top:611.7px" width="8.2" height="4.8" viewBox="0 0 8.2 4.8"><path d="M0.5 0.5 L4.1 4.2 L7.7 0.5" stroke="#a0a2a6" stroke-width="1" fill="none" stroke-linecap="round"/></svg>
<div class="inp" style="left:1218px;top:599.83px;width:155.4px"></div>
<div class="a" style="left:1227.7px;top:606.73px;color:#c2c2c2">请选择</div>
<svg style="left:1355.3px;top:611.7px" width="8.2" height="4.8" viewBox="0 0 8.2 4.8"><path d="M0.5 0.5 L4.1 4.2 L7.7 0.5" stroke="#a0a2a6" stroke-width="1" fill="none" stroke-linecap="round"/></svg>
<div class="inp" style="left:1386.2px;top:599.83px;width:71.5px"></div>
<div class="a" style="left:207.9px;top:647.17px">10</div>
<div class="a" style="left:291.8px;top:647.17px">deleted_at</div>
<div class="inp" style="left:544.2px;top:640.17px;width:239.2px"></div>
<div class="a" style="left:554.3px;top:647.17px">删除时间</div>
<div class="cb" style="left:826.35px;top:648.02px"></div>
<div class="cb" style="left:910.45px;top:648.02px"></div>
<div class="cb" style="left:994.70px;top:648.02px"></div>
<div class="inp" style="left:1050px;top:640.27px;width:154.5px;background:#fff"></div>
<div class="a" style="left:1059.8px;top:647.17px;color:#333639">=</div>
<svg style="left:1187.3px;top:652.2px" width="8.2" height="4.8" viewBox="0 0 8.2 4.8"><path d="M0.5 0.5 L4.1 4.2 L7.7 0.5" stroke="#a0a2a6" stroke-width="1" fill="none" stroke-linecap="round"/></svg>
<div class="inp" style="left:1218px;top:640.27px;width:155.4px"></div>
<div class="a" style="left:1227.7px;top:647.17px;color:#c2c2c2">请选择</div>
<svg style="left:1355.3px;top:652.2px" width="8.2" height="4.8" viewBox="0 0 8.2 4.8"><path d="M0.5 0.5 L4.1 4.2 L7.7 0.5" stroke="#a0a2a6" stroke-width="1" fill="none" stroke-linecap="round"/></svg>
<div class="inp" style="left:1386.2px;top:640.27px;width:71.5px"></div>
<div style="position:absolute;left:160px;top:712px;width:1351px;height:45px;background:linear-gradient(to bottom,rgba(0,0,0,0) 0%,rgba(0,0,0,.015) 40%,rgba(20,24,30,.11) 100%);-webkit-mask-image:linear-gradient(to right,#000 0%,#000 80%,rgba(0,0,0,.35) 95%,rgba(0,0,0,0) 100%)"></div>
<div style="position:absolute;left:0;top:0;width:1.2px;height:757px;background:#1c2a3a"></div>
<div style="position:absolute;left:160px;top:47px;width:2px;height:710px;background:linear-gradient(to right,rgba(0,0,0,.06),rgba(0,0,0,0))"></div>
<svg style="left:0;top:751px" width="6" height="6" viewBox="0 0 6 6"><path d="M0 0 Q0 6 6 6 H0 Z" fill="#000"/></svg>
<svg style="left:1506px;top:752px" width="5" height="5" viewBox="0 0 5 5"><path d="M5 0 Q5 5 0 5 H5 Z" fill="#000"/></svg>
<div style="position:absolute;left:168.2px;top:348.5px;width:3.1px;height:57.5px;border-radius:1.6px;background:#c2c2c4"></div>
</body>
</html>
